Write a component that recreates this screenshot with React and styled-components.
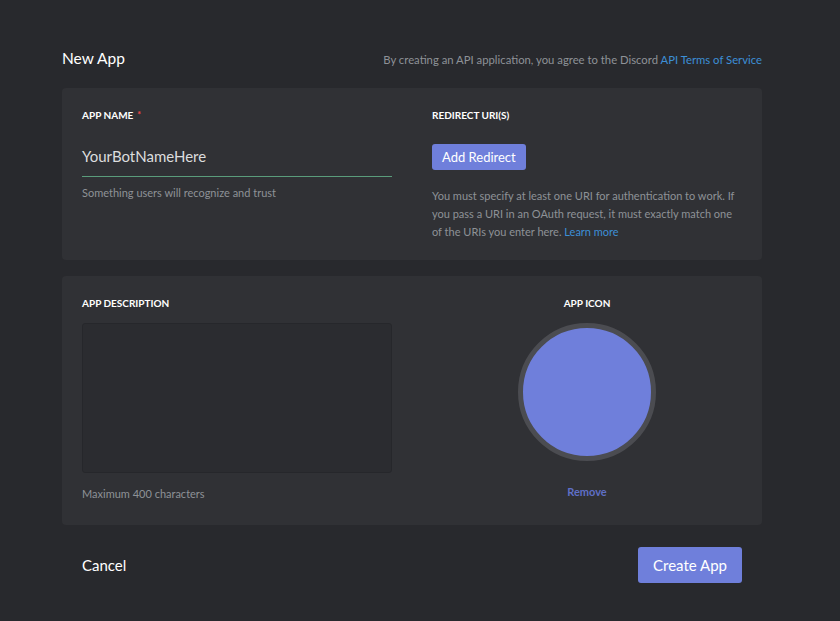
import React from "react";
import styled, { createGlobalStyle } from "styled-components";

const GlobalStyle = createGlobalStyle`
  html, body {
    margin: 0;
    background: #28292d;
    font-family: Lato, "Open Sans", "Noto Sans", sans-serif;
  }
`;

const Page = styled.div`
  width: 840px;
  min-height: 621px;
  box-sizing: border-box;
  padding: 45px 78px 0 62px;
  background: #28292d;
`;

const Header = styled.div`
  display: flex;
  align-items: center;
  justify-content: space-between;
  height: 28px;
  margin-bottom: 15px;
`;

const Title = styled.h1`
  margin: 0 0 2px;
  font-size: 15.5px;
  font-weight: 400;
  color: #ffffff;
`;

const Agreement = styled.div`
  font-size: 11.3px;
  color: #8e9297;
`;

const Link = styled.a`
  color: #3d8fd6;
  text-decoration: none;
`;

const Card = styled.section`
  display: grid;
  grid-template-columns: 310px 310px;
  column-gap: 40px;
  padding: ${(p) => p.$pad || "20px"};
  background: #303135;
  border-radius: 4px;
  margin-bottom: 16px;
`;

const Column = styled.div`
  display: flex;
  flex-direction: column;
  align-items: ${(p) => (p.$center ? "center" : "flex-start")};
`;

const Label = styled.div`
  font-size: 10px;
  font-weight: 700;
  color: #ffffff;
  line-height: 14px;
  text-transform: uppercase;
`;

const Required = styled.span`
  color: #f04747;
  margin-left: 4px;
  font-size: 9px;
  vertical-align: top;
`;

const NameInput = styled.div`
  align-self: stretch;
  margin-top: 24px;
  padding-bottom: 10px;
  font-size: 15px;
  line-height: 20px;
  color: #dcddde;
  border-bottom: 1px solid #5a9c7b;
`;

const Help = styled.div`
  font-size: 11px;
  line-height: 18px;
  color: #8e9297;
  margin-top: ${(p) => p.$top || "0"};
`;

const Button = styled.button`
  border: 0;
  border-radius: 3px;
  background: #6f7fdb;
  color: #ffffff;
  font-family: inherit;
  cursor: pointer;
  padding: 0 ${(p) => (p.$large ? "15px" : "10px")};
  height: ${(p) => (p.$large ? "36px" : "26px")};
  font-size: ${(p) => (p.$large ? "15px" : "13px")};
  margin-top: ${(p) => p.$top || "0"};
`;

const DescBox = styled.div`
  align-self: stretch;
  box-sizing: border-box;
  height: 150px;
  margin-top: 13px;
  background: #2b2c30;
  border: 1px solid #26272b;
  border-radius: 3px;
`;

const Avatar = styled.div`
  width: 128px;
  height: 128px;
  margin-top: 13px;
  border-radius: 50%;
  background: #6f7fdb;
  border: 5px solid #4b4c51;
`;

const Remove = styled.div`
  margin-top: 24px;
  font-size: 11px;
  font-weight: 700;
  color: #5f6fc6;
`;

const Footer = styled.div`
  display: flex;
  align-items: center;
  justify-content: space-between;
  padding: 6px 20px 0;
`;

const Cancel = styled.div`
  font-size: 15px;
  color: #ffffff;
`;

export default function App() {
  return (
    <>
      <GlobalStyle />
      <Page>
        <Header>
          <Title>New App</Title>
          <Agreement>
            By creating an API application, you agree to the Discord{" "}
            <Link>API Terms of Service</Link>
          </Agreement>
        </Header>

        <Card $pad="20px 20px 19px">
          <Column>
            <Label>
              App Name<Required>*</Required>
            </Label>
            <NameInput>YourBotNameHere</NameInput>
            <Help $top="7px">Something users will recognize and trust</Help>
          </Column>
          <Column>
            <Label>Redirect URI(s)</Label>
            <Button $top="22px">Add Redirect</Button>
            <Help $top="17px">
              You must specify at least one URI for authentication to work. If
              you pass a URI in an OAuth request, it must exactly match one of
              the URIs you enter here. <Link>Learn more</Link>
            </Help>
          </Column>
        </Card>

        <Card $pad="20px 20px 22px">
          <Column>
            <Label>App Description</Label>
            <DescBox />
            <Help $top="12px">Maximum 400 characters</Help>
          </Column>
          <Column $center>
            <Label>App Icon</Label>
            <Avatar />
            <Remove>Remove</Remove>
          </Column>
        </Card>

        <Footer>
          <Cancel>Cancel</Cancel>
          <Button $large>Create App</Button>
        </Footer>
      </Page>
    </>
  );
}
